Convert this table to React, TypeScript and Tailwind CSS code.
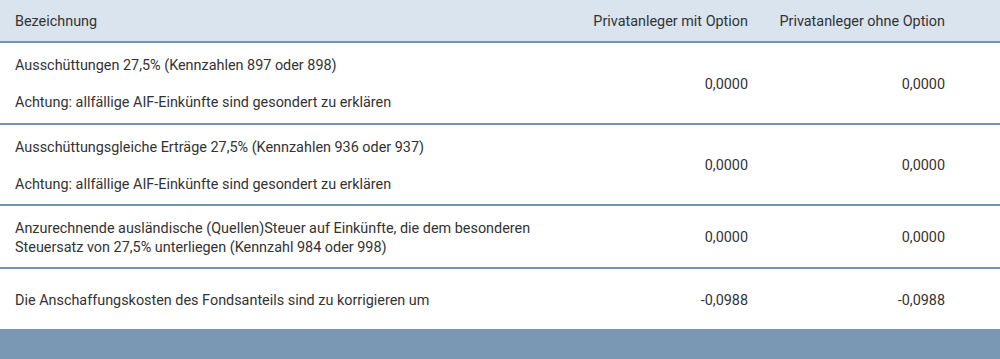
const rows = [
  {
    label: (
      <>
        Ausschüttungen 27,5% (Kennzahlen 897 oder 898)
        <br />
        <br />
        Achtung: allfällige AIF-Einkünfte sind gesondert zu erklären
      </>
    ),
    mit: "0,0000",
    ohne: "0,0000",
    h: "min-h-[79px]",
  },
  {
    label: (
      <>
        Ausschüttungsgleiche Erträge 27,5% (Kennzahlen 936 oder 937)
        <br />
        <br />
        Achtung: allfällige AIF-Einkünfte sind gesondert zu erklären
      </>
    ),
    mit: "0,0000",
    ohne: "0,0000",
    h: "min-h-[80px]",
  },
  {
    label: (
      <>
        Anzurechnende ausländische (Quellen)Steuer auf Einkünfte, die dem besonderen
        <br />
        Steuersatz von 27,5% unterliegen (Kennzahl 984 oder 998)
      </>
    ),
    mit: "0,0000",
    ohne: "0,0000",
    h: "min-h-[60px]",
  },
  {
    label: <>Die Anschaffungskosten des Fondsanteils sind zu korrigieren um</>,
    mit: "-0,0988",
    ohne: "-0,0988",
    h: "min-h-[60px]",
  },
]

export default function App() {
  return (
    <div className="w-[1000px] h-[359px] bg-white text-[14.4px] leading-[18.5px] text-[#333] font-['Roboto',sans-serif] flex flex-col">
      {/* header */}
      <div className="grid grid-cols-[1fr_184px_237px] items-center h-[43px] pt-[3px] bg-[#d9e4ee] border-b-2 border-[#7593b0]">
        <div className="pl-[15px]">Bezeichnung</div>
        <div className="text-right pr-[15px]">Privatanleger mit Option</div>
        <div className="text-right pr-[55px]">Privatanleger ohne Option</div>
      </div>

      {rows.map((r, i) => (
        <div
          key={i}
          className={`grid grid-cols-[1fr_184px_237px] items-center pt-[14px] pb-[10px] ${r.h} ${i < rows.length - 1 ? "border-b-2 border-[#7593b0]" : ""}`}
        >
          <div className="pl-[15px]">{r.label}</div>
          <div className="text-right pr-[15px]">{r.mit}</div>
          <div className="text-right pr-[55px]">{r.ohne}</div>
        </div>
      ))}

      <div className="flex-1 bg-[#7a97b3]" />
    </div>
  )
}
